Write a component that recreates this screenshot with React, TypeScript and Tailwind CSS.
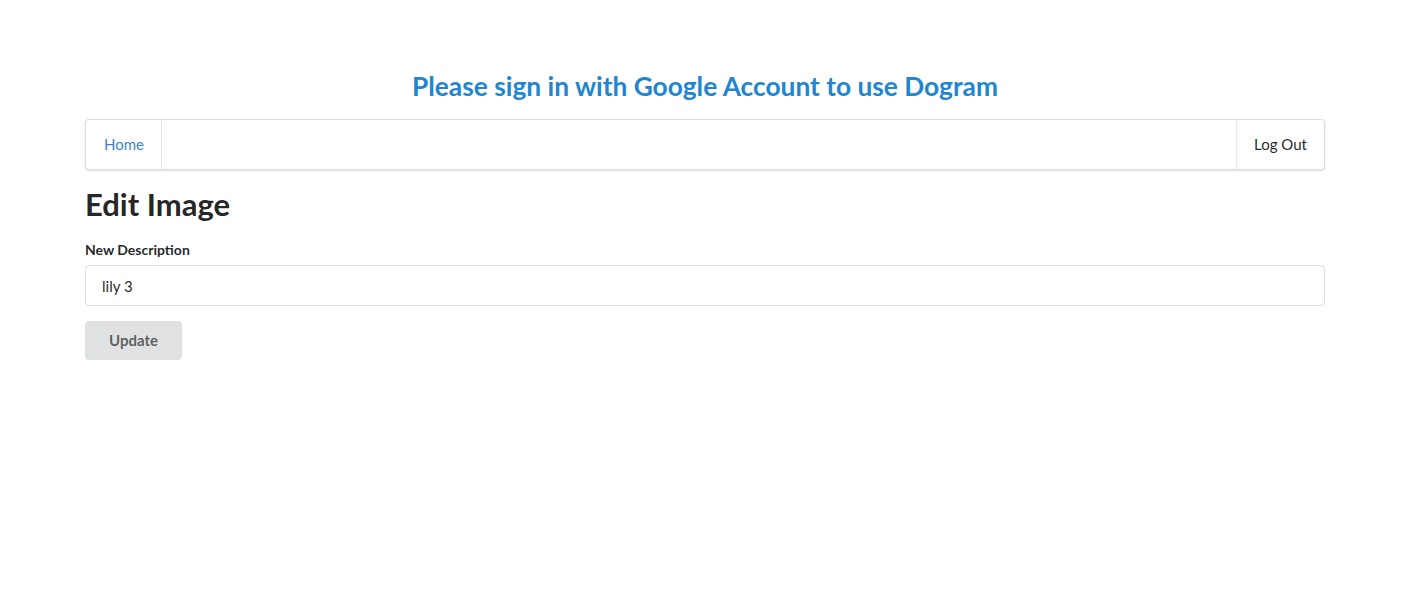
export default function App() {
  return (
    <div className="min-h-screen bg-white font-['Lato','Helvetica_Neue',Arial,sans-serif] text-[15px] text-[rgba(0,0,0,0.87)]">
      <div className="ml-[85px] w-[1240px] pt-[69px]">
        {/* Header */}
        <h2 className="text-center text-[26.3px] font-bold leading-[34px] text-[#2185d0]">
          Please sign in with Google Account to use Dogram
        </h2>

        {/* Menu */}
        <nav className="mt-[16px] flex h-[51px] rounded-[4px] border border-[rgba(34,36,38,0.15)] bg-white shadow-[0_1px_2px_0_rgba(34,36,38,0.15)]">
          <a className="flex items-center border-r border-[rgba(34,36,38,0.1)] pl-[18px] pr-[17px] text-[#4183c4]">Home</a>
          <div className="flex-1" />
          <a className="flex items-center border-l border-[rgba(34,36,38,0.1)] px-[17px] text-[rgba(0,0,0,0.87)]">Log Out</a>
        </nav>

        {/* Form */}
        <h1 className="mt-[16px] text-[31px] font-bold leading-[36px] text-[rgba(0,0,0,0.87)]">Edit Image</h1>
        <form className="mt-[20px]">
          <label className="block text-[14px] font-bold leading-[16px]">New Description</label>
          <input
            defaultValue="lily 3"
            className="mt-[7px] block h-[41px] w-full rounded-[4px] border border-[rgba(34,36,38,0.15)] px-[16px] text-[15px] outline-none"
          />
          <button
            type="button"
            className="mt-[15px] h-[39px] w-[97px] rounded-[4px] bg-[#e0e1e2] text-[15px] font-bold text-[rgba(0,0,0,0.6)]"
          >
            Update
          </button>
        </form>
      </div>
    </div>
  );
}
